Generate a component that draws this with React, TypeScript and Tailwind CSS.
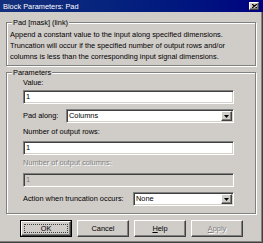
import React from "react";

// Win2000-style "Block Parameters: Pad" dialog

const sunken =
  "border border-t-[#808080] border-l-[#808080] border-b-white border-r-white shadow-[inset_1px_1px_0_#404040,inset_-1px_-1px_0_#d4d0c8]";
const raised =
  "border border-t-white border-l-white border-b-[#404040] border-r-[#404040] shadow-[inset_-1px_-1px_0_#808080]";
const etched =
  "border border-[#808080] shadow-[inset_1px_1px_0_#fff,1px_1px_0_#fff]";

function Arrow() {
  return (
    <div className={`w-[11px] h-full bg-[#d0ccc8] flex items-center justify-center ${raised}`}>
      <svg width="5" height="3" viewBox="0 0 5 3">
        <path d="M0 0h5L2.5 3z" fill="#000" />
      </svg>
    </div>
  );
}

function Select({ value, width }: { value: string; width: string }) {
  return (
    <div className={`${width} h-[14px] bg-white flex items-stretch p-[1px] ${sunken}`}>
      <span className="flex-1 pl-[1px] leading-[10px]">{value}</span>
      <Arrow />
    </div>
  );
}

function Group({ title, className, children }: { title: string; className: string; children: React.ReactNode }) {
  return (
    <div className={`relative w-[250px] ${etched} ${className}`}>
      <span className="absolute -top-[6px] left-[5px] px-[1px] bg-[#d0ccc8] leading-[11px]">
        {title}
      </span>
      {children}
    </div>
  );
}

function Button({ children, focused }: { children: React.ReactNode; focused?: boolean }) {
  if (focused) {
    return (
      <div className="w-[52px] h-[17px] border border-black">
        <div className={`w-full h-full flex items-center justify-center p-[2px] ${raised}`}>
          <div className="w-full h-full border border-dotted border-[#404040] flex items-center justify-center">
            {children}
          </div>
        </div>
      </div>
    );
  }
  return (
    <div className={`w-[52px] h-[17px] flex items-center justify-center ${raised}`}>{children}</div>
  );
}

export default function App() {
  return (
    <div className="w-[263px] h-[243px] bg-[#d0ccc8] flex flex-col overflow-hidden font-['Liberation_Sans',Arial,sans-serif] text-[7.4px] leading-[11px] text-black">
      {/* title bar */}
      <div className="h-[12px] flex items-center justify-between pl-[3px] pr-[4px] bg-linear-to-r from-[#14307c] to-[#000080]">
        <span className="text-white">Block Parameters: Pad</span>
        <div className={`w-[10px] h-[8px] bg-[#d0ccc8] flex items-center justify-center ${raised}`}>
          <svg width="5" height="4" viewBox="0 0 5 4">
            <path d="M0 0l5 4M5 0L0 4" stroke="#000" strokeWidth="1.2" />
          </svg>
        </div>
      </div>

      <div className="flex-1 flex flex-col pl-[6px] border-r border-b border-[#404040] shadow-[inset_-1px_-1px_0_#808080]">
        <Group title="Pad [mask] (link)" className="mt-[10px] h-[44px] pt-[6px] pl-[3px]">
          <p>Append a constant value to the input along specified dimensions.</p>
          <p>Truncation will occur if the specified number of output rows and/or</p>
          <p>columns is less than the corresponding input signal dimensions.</p>
        </Group>

        <Group title="Parameters" className="mt-[6px] h-[142px] pt-[5px] pl-[16px]">
          <div className="w-[211px] flex flex-col leading-[10px]">
            <span>Value:</span>
            <div className={`mt-[2px] h-[14px] bg-white pl-[2px] flex items-center ${sunken}`}>1</div>

            <div className="mt-[5px] flex items-center justify-between">
              <span>Pad along:</span>
              <Select value="Columns" width="w-[168px]" />
            </div>

            <span className="mt-[4px]">Number of output rows:</span>
            <div className={`mt-[4px] h-[14px] bg-white pl-[2px] flex items-center ${sunken}`}>1</div>

            <span className="mt-[3px] text-[#808080] [text-shadow:1px_1px_0_#fff]">Number of output columns:</span>
            <div className={`mt-[5px] h-[14px] bg-[#d0ccc8] pl-[2px] flex items-center text-[#808080] ${sunken}`}>1</div>

            <div className="mt-[5px] flex items-center justify-between">
              <span>Action when truncation occurs:</span>
              <Select value="None" width="w-[101px]" />
            </div>
          </div>
        </Group>

        <div className="mt-[6px] ml-[14px] flex gap-[5px]">
          <Button focused>OK</Button>
          <Button>Cancel</Button>
          <Button>
            <span>
              <span className="underline">H</span>elp
            </span>
          </Button>
          <Button>
            <span className="text-[#808080] [text-shadow:1px_1px_0_#fff]">
              <span className="underline">A</span>pply
            </span>
          </Button>
        </div>
      </div>
    </div>
  );
}
